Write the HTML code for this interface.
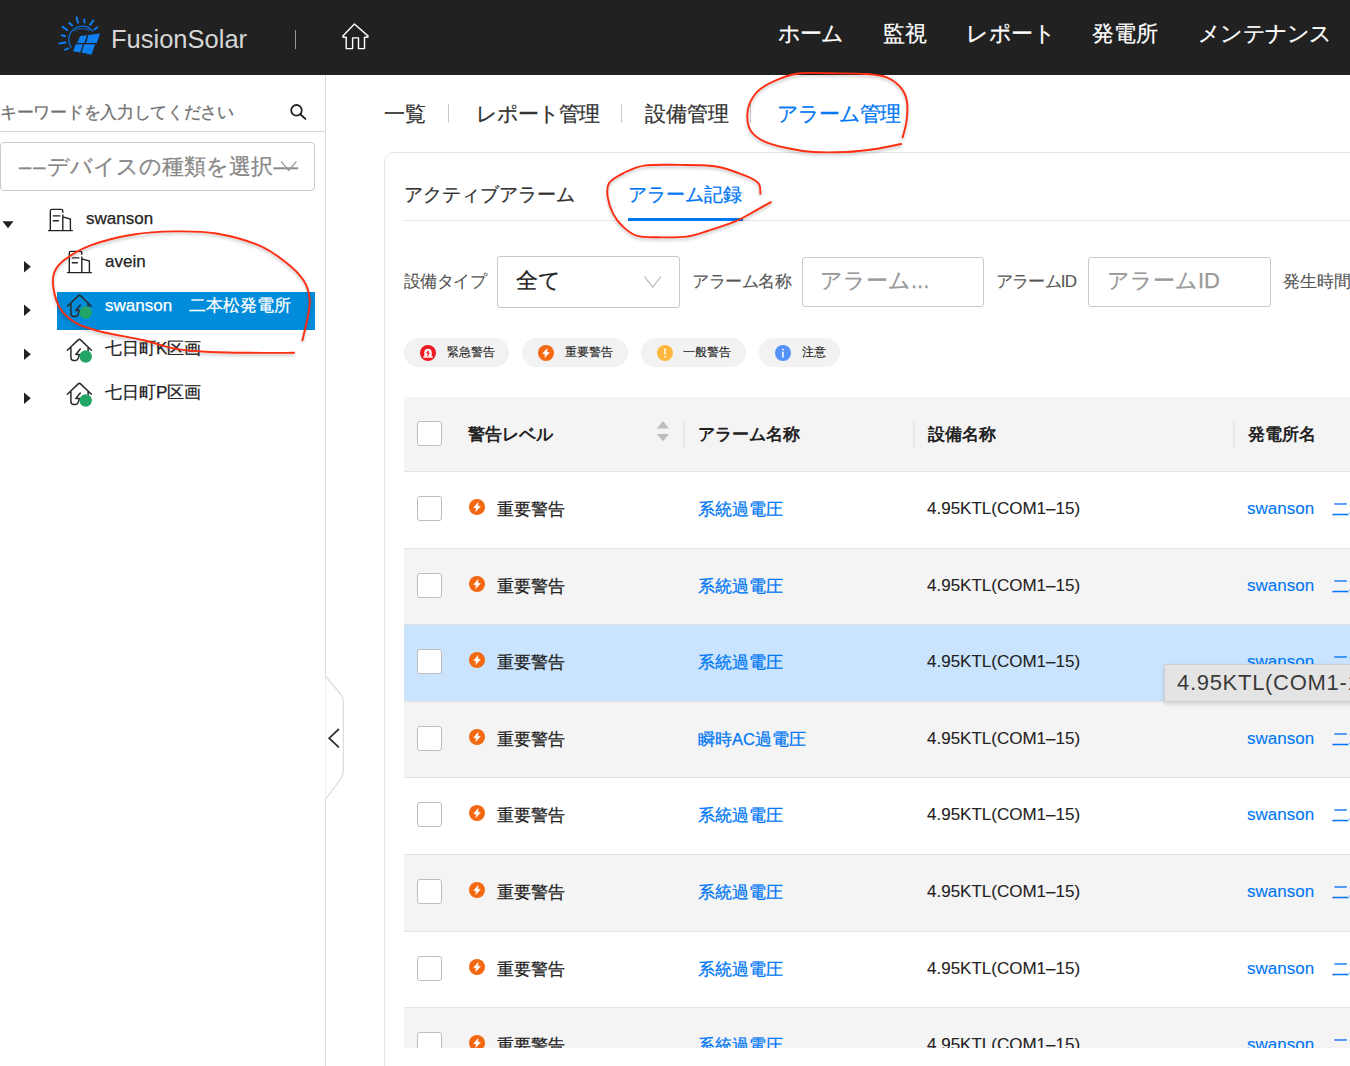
<!DOCTYPE html>
<html lang="ja">
<head>
<meta charset="utf-8">
<style>
*{box-sizing:border-box;margin:0;padding:0}
html,body{width:1350px;height:1066px;overflow:hidden;background:#fff}
body{position:relative;font-family:"Liberation Sans",sans-serif;color:#333;-webkit-text-stroke:.25px}
.a{position:absolute;white-space:nowrap}
svg{display:block}
#hdr{position:absolute;left:0;top:0;width:1350px;height:75px;background:#212121}
.nav{position:absolute;top:19px;font-size:22px;color:#fff;line-height:30px;white-space:nowrap}
#side{position:absolute;left:0;top:75px;width:326px;height:991px;border-right:1px solid #dcdcdc;background:#fff}
.tree{position:absolute;font-size:17px;color:#222;line-height:22px;white-space:nowrap}
.tabs{position:absolute;top:99px;font-size:21px;line-height:30px;color:#333;white-space:nowrap}
.vd{position:absolute;width:1px;background:#c8c8c8}
#card{position:absolute;left:384px;top:152px;width:1100px;height:1000px;border:1px solid #e6e6e6;border-radius:10px;background:#fff}
.lbl{position:absolute;font-size:17px;color:#555;line-height:22px;white-space:nowrap;-webkit-text-stroke:.12px}
.inp{position:absolute;border:1px solid #c9c9c9;border-radius:3px;background:#fff}
.chip{position:absolute;top:338px;height:29px;border-radius:15px;background:#f2f2f2;font-size:12px;color:#222;line-height:29px;white-space:nowrap;-webkit-text-stroke:.12px}
.chip svg{position:absolute;top:6.8px}
#tbl{position:absolute;left:404px;top:397px;width:946px;height:651px;overflow:hidden}
.row{position:absolute;left:0;width:1000px;border-top:1px solid #e3e3e3}
.cb{position:absolute;left:13px;top:24px;width:25px;height:25px;border:1px solid #bdbdbd;border-radius:3px;background:#fff}
.ico{position:absolute;left:65px;top:27px}
.cell{position:absolute;top:26px;font-size:17px;line-height:22px;color:#222;white-space:nowrap;-webkit-text-stroke:.1px}
.lnk{color:#0077f5}
.hd{font-weight:bold;top:27px;-webkit-text-stroke:0}
.cj{font-size:16.5px;top:26px;-webkit-text-stroke:.25px}
</style>
</head>
<body>
<div id="hdr">
  <div class="a" style="left:111px;top:22.5px;font-size:25.5px;color:#d6d6d6;line-height:32px;-webkit-text-stroke:0">FusionSolar</div>
  <div class="a" style="left:295px;top:30px;width:1px;height:19px;background:#999"></div>
  
<!-- logo -->
<svg class="a" style="left:55px;top:12px" width="50" height="48" viewBox="0 0 50 48">
 <g fill="#0f7ef0">
  <path d="M25.2 23.9 L32 23.2 L29.3 31.1 L22.1 30.9 Z"/>
  <path d="M33.3 23 L45 21.4 L41.9 31.1 L31.1 31.1 Z"/>
  <path d="M20.7 32.2 L27.9 32.2 L25.2 40.5 L18 39.2 Z"/>
  <path d="M29.3 32.2 L40.1 32.2 L36.5 42.8 L26.6 40.5 Z"/>
 </g>
 <g stroke="#0f7ef0" stroke-width="2" stroke-linecap="round" fill="none">
  <path d="M21.6 5.4 L23 10.8 M29.3 7.7 L29.5 10.6 M38.3 8.6 L35.1 12.8 M42.3 15.3 L39.6 17.3 M14.4 11 L17.1 13.5 M7.7 14.9 L12.4 18.2 M6.8 23.2 L10.1 24.3 M4.5 31.5 L10.4 30.6 M10.1 37.8 L13.3 36.3"/>
 </g>
 <path d="M16.5 35.5 A13 13 0 1 1 38 19.5" stroke="#0a6fd6" stroke-width="1.3" fill="none"/>
 <path d="M19 19 Q26 14.5 35 18.5" stroke="#0a6fd6" stroke-width="0.9" fill="none"/>
</svg>
<!-- home -->
<svg class="a" style="left:0;top:0" width="400" height="75" viewBox="0 0 400 75">
 <path d="M354.4 24 L342.9 35.9 Q342.3 37.2 343.6 37.2 L346.2 37.2 L346.2 48.6 L352.6 48.6 L352.6 37.9 L358.5 37.9 L358.5 48.6 L364.5 48.6 L364.5 37.2 L367.2 37.2 Q368.5 37.2 367.9 35.9 Z" stroke="#fff" stroke-width="1.4" fill="none" stroke-linejoin="round"/>
</svg>
<div class="nav" style="left:778px;letter-spacing:-1px">ホーム</div>
  <div class="nav" style="left:883px">監視</div>
  <div class="nav" style="left:966px;letter-spacing:-.4px">レポート</div>
  <div class="nav" style="left:1092px">発電所</div>
  <div class="nav" style="left:1198px;letter-spacing:-.75px">メンテナンス</div>
</div>
<div id="side">
  <div class="a" style="left:0;top:26.5px;font-size:17px;color:#707070;line-height:22px;letter-spacing:-.3px">キーワードを入力してください</div>
  <div class="a" style="left:0;top:56px;width:325px;height:1px;background:#d6d6d6"></div>
  <div class="inp" style="left:0;top:67px;width:315px;height:49px;border-radius:4px"></div>
  <div class="a" style="left:19px;top:77px;font-size:22px;color:#888;line-height:30px"><span style="letter-spacing:2px">––</span>デバイスの種類を選択<span style="letter-spacing:0">––</span></div>
</div>

<div class="a" style="left:57px;top:292px;width:258px;height:38px;background:#008cdb"></div>
<!-- search icon -->
<svg class="a" style="left:286px;top:100px" width="24" height="24" viewBox="286 100 24 24">
 <circle cx="296.5" cy="110.3" r="5.3" stroke="#222" stroke-width="1.8" fill="none"/>
 <path d="M300.3 114.2 L305.4 118.9" stroke="#222" stroke-width="1.9" stroke-linecap="round"/>
</svg>
<!-- select chevron -->
<svg class="a" style="left:278px;top:158px" width="22" height="16" viewBox="278 158 22 16">
 <path d="M281 161.3 L288.7 170.5 L296.5 161.3" stroke="#999" stroke-width="1.3" fill="none"/>
</svg>
<!-- tree triangles -->
<svg class="a" style="left:0;top:200px" width="100" height="210" viewBox="0 200 100 210">
 <path d="M2.5 221.3 H13.5 L8 228.3 Z" fill="#222"/>
 <path d="M24 261 V272.4 L30.8 266.7 Z" fill="#222"/>
 <path d="M24 304.6 V316 L30.8 310.3 Z" fill="#222"/>
 <path d="M24 348.6 V360 L30.8 354.3 Z" fill="#222"/>
 <path d="M24 392.6 V404 L30.8 398.3 Z" fill="#222"/>
</svg>

<svg class="a" style="left:44px;top:204px" width="34" height="32" viewBox="0 0 34 32"><path d="M6.3 26 V6.9 Q6.3 5.4 7.8 5.4 H17.3 Q18.8 5.4 18.8 6.9 V8.3 M18.8 11 V26 M18.8 12.9 L26.4 15 V26.6 M4.5 26.6 H28.4 M9.3 11.9 H15.9 M9.3 16.7 H14.4" stroke="#222" stroke-width="1.4" fill="none" stroke-linecap="round"/></svg>
<svg class="a" style="left:63px;top:246px" width="34" height="32" viewBox="0 0 34 32"><path d="M6.3 26 V6.9 Q6.3 5.4 7.8 5.4 H17.3 Q18.8 5.4 18.8 6.9 V8.3 M18.8 11 V26 M18.8 12.9 L26.4 15 V26.6 M4.5 26.6 H28.4 M9.3 11.9 H15.9 M9.3 16.7 H14.4" stroke="#222" stroke-width="1.4" fill="none" stroke-linecap="round"/></svg>
<svg class="a" style="left:62px;top:290px" width="34" height="32" viewBox="0 0 34 32"><path d="M5.4 16.2 L16.2 5.9 Q17.4 4.8 18.6 5.9 L29.4 16.2 M8.9 14 V23.4 Q8.9 26.4 11.9 26.4 H13.6 Q15 26.4 15.8 25.2 L17.7 20.4 H13.8 L18.3 15 M26.1 13.5 V19" stroke="#2a2a2a" stroke-width="1.5" fill="none" stroke-linecap="round" stroke-linejoin="round"/><circle cx="23.7" cy="22.5" r="6.2" fill="#22a565"/></svg>
<svg class="a" style="left:62px;top:334px" width="34" height="32" viewBox="0 0 34 32"><path d="M5.4 16.2 L16.2 5.9 Q17.4 4.8 18.6 5.9 L29.4 16.2 M8.9 14 V23.4 Q8.9 26.4 11.9 26.4 H13.6 Q15 26.4 15.8 25.2 L17.7 20.4 H13.8 L18.3 15 M26.1 13.5 V19" stroke="#2a2a2a" stroke-width="1.5" fill="none" stroke-linecap="round" stroke-linejoin="round"/><circle cx="23.7" cy="22.5" r="6.2" fill="#22a565"/></svg>
<svg class="a" style="left:62px;top:378px" width="34" height="32" viewBox="0 0 34 32"><path d="M5.4 16.2 L16.2 5.9 Q17.4 4.8 18.6 5.9 L29.4 16.2 M8.9 14 V23.4 Q8.9 26.4 11.9 26.4 H13.6 Q15 26.4 15.8 25.2 L17.7 20.4 H13.8 L18.3 15 M26.1 13.5 V19" stroke="#2a2a2a" stroke-width="1.5" fill="none" stroke-linecap="round" stroke-linejoin="round"/><circle cx="23.7" cy="22.5" r="6.2" fill="#22a565"/></svg>
<div class="tree" style="left:86px;top:208px">swanson</div>
<div class="tree" style="left:105px;top:251px">avein</div>
<div class="tree" style="left:105px;top:295px;color:#fff">swanson　二本松発電所</div>
<div class="tree" style="left:105px;top:338px">七日町K区画</div>
<div class="tree" style="left:105px;top:382px">七日町P区画</div>

<div class="tabs" style="left:384px">一覧</div>
<div class="vd" style="left:448px;top:104px;height:19px"></div>
<div class="tabs" style="left:476px;letter-spacing:-1.1px">レポート管理</div>
<div class="vd" style="left:621px;top:104px;height:19px"></div>
<div class="tabs" style="left:645px">設備管理</div>
<div class="vd" style="left:750px;top:104px;height:19px"></div>
<div class="tabs" style="left:777px;color:#0077f5;letter-spacing:-1px">アラーム管理</div>

<div id="card"></div>
<div class="a" style="left:404px;top:181px;font-size:19px;line-height:28px;color:#333">アクティブアラーム</div>
<div class="a" style="left:628px;top:181px;font-size:19px;line-height:28px;color:#0077f5">アラーム記録</div>
<div class="a" style="left:404px;top:220px;width:946px;height:1px;background:#e8e8e8"></div>
<div class="a" style="left:628px;top:218px;width:115px;height:3px;background:#0077f5"></div>

<div class="lbl" style="left:404px;top:271px;letter-spacing:-.6px">設備タイプ</div>
<div class="inp" style="left:497px;top:256px;width:183px;height:52px"></div>
<div class="a" style="left:516px;top:266px;font-size:22px;line-height:30px;color:#222">全て</div>

<svg class="a" style="left:640px;top:272px" width="26" height="20" viewBox="640 272 26 20">
 <path d="M644.3 276.5 L652.7 287 L661 276.5" stroke="#b5b5b5" stroke-width="1.2" fill="none"/>
</svg>

<div class="lbl" style="left:692px;top:271px;letter-spacing:-.4px">アラーム名称</div>
<div class="inp" style="left:802px;top:257px;width:182px;height:50px"></div>
<div class="a" style="left:820px;top:266px;font-size:22px;line-height:30px;color:#999">アラーム...</div>
<div class="lbl" style="left:996px;top:271px;letter-spacing:-.8px">アラームID</div>
<div class="inp" style="left:1088px;top:257px;width:183px;height:50px"></div>
<div class="a" style="left:1107px;top:266px;font-size:22px;line-height:30px;color:#999">アラームID</div>
<div class="lbl" style="left:1283px;top:271px">発生時間</div>

<div class="chip" style="left:404px;width:105px"><svg style="left:16px" width="16" height="16" viewBox="0 0 16 16"><circle cx="8" cy="8" r="8" fill="#ee1c22"/><path d="M4.3 11.5 V7.6 Q4.3 3.7 8 3.7 Q11.7 3.7 11.7 7.6 V11.5 Z" fill="#fff"/><rect x="3.2" y="11.3" width="9.6" height="1.4" fill="#fff"/><path d="M8.8 5.8 L6.7 8 H9.2 L7.4 10.9" stroke="#ee1c22" stroke-width="1.1" fill="none" stroke-linejoin="round"/></svg><span style="position:absolute;left:43px">緊急警告</span></div>
<div class="chip" style="left:522px;width:106px"><svg style="left:16px" width="16" height="16" viewBox="0 0 16 16"><circle cx="8" cy="8" r="8" fill="#f56812"/><path d="M9.1 3.6 L4.8 8.5 L7.4 9.2 L6.8 12.4 L11.3 7.6 L8.7 6.9 Z" fill="#fff" stroke="#fff" stroke-width=".6" stroke-linejoin="round"/></svg><span style="position:absolute;left:43px">重要警告</span></div>
<div class="chip" style="left:641px;width:105px"><svg style="left:16px" width="16" height="16" viewBox="0 0 16 16"><circle cx="8" cy="8" r="8" fill="#ffb83d"/><rect x="7.3" y="3.5" width="1.4" height="6.2" rx=".7" fill="#fff"/><circle cx="8" cy="11.7" r=".85" fill="#fff"/></svg><span style="position:absolute;left:42px">一般警告</span></div>
<div class="chip" style="left:759px;width:81px"><svg style="left:16px" width="16" height="16" viewBox="0 0 16 16"><circle cx="8" cy="8" r="8" fill="#5592fa"/><circle cx="7.9" cy="4.6" r=".95" fill="#fff"/><rect x="7.1" y="6.6" width="1.6" height="5.8" rx=".5" fill="#fff"/></svg><span style="position:absolute;left:43px">注意</span></div>

<div id="tbl">
<div class="row" style="top:0;height:75px;background:#f4f4f4;border-top:none;border-bottom:1px solid #e3e3e3">
  <div class="cb"></div>
<svg style="position:absolute;left:0;top:0" width="946" height="75" viewBox="404 397 946 75">
 <path d="M656.9 428.5 L663 421 L669 428.5 Z M656.9 434 L669 434 L663 441.2 Z" fill="#bdbdbd"/>
 <path d="M684 421 V447 M914 421 V447 M1234 421 V447" stroke="#e2e2e2" stroke-width="1.5"/>
</svg>
  <div class="cell hd" style="left:64px">警告レベル</div>
  <div class="cell hd" style="left:294px">アラーム名称</div>
  <div class="cell hd" style="left:524px">設備名称</div>
  <div class="cell hd" style="left:844px">発電所名</div>
</div>
<div class="row" style="top:74px;height:77px;background:#fff"><div class="cb"></div><div class="ico"><svg width="16" height="16" viewBox="0 0 16 16"><circle cx="8" cy="8" r="8" fill="#f56812"/><path d="M9.1 3.6 L4.8 8.5 L7.4 9.2 L6.8 12.4 L11.3 7.6 L8.7 6.9 Z" fill="#fff" stroke="#fff" stroke-width=".6" stroke-linejoin="round"/></svg></div><div class="cell cj" style="left:93px">重要警告</div><div class="cell cj lnk" style="left:294px">系統過電圧</div><div class="cell" style="left:523px">4.95KTL(COM1–15)</div><div class="cell lnk" style="left:843px">swanson</div><div class="cell cj lnk" style="left:928px">二本松発電所</div></div>
<div class="row" style="top:151px;height:76px;background:#f4f4f4"><div class="cb"></div><div class="ico"><svg width="16" height="16" viewBox="0 0 16 16"><circle cx="8" cy="8" r="8" fill="#f56812"/><path d="M9.1 3.6 L4.8 8.5 L7.4 9.2 L6.8 12.4 L11.3 7.6 L8.7 6.9 Z" fill="#fff" stroke="#fff" stroke-width=".6" stroke-linejoin="round"/></svg></div><div class="cell cj" style="left:93px">重要警告</div><div class="cell cj lnk" style="left:294px">系統過電圧</div><div class="cell" style="left:523px">4.95KTL(COM1–15)</div><div class="cell lnk" style="left:843px">swanson</div><div class="cell cj lnk" style="left:928px">二本松発電所</div></div>
<div class="row" style="top:227px;height:77px;background:#c9e4fc"><div class="cb"></div><div class="ico"><svg width="16" height="16" viewBox="0 0 16 16"><circle cx="8" cy="8" r="8" fill="#f56812"/><path d="M9.1 3.6 L4.8 8.5 L7.4 9.2 L6.8 12.4 L11.3 7.6 L8.7 6.9 Z" fill="#fff" stroke="#fff" stroke-width=".6" stroke-linejoin="round"/></svg></div><div class="cell cj" style="left:93px">重要警告</div><div class="cell cj lnk" style="left:294px">系統過電圧</div><div class="cell" style="left:523px">4.95KTL(COM1–15)</div><div class="cell lnk" style="left:843px">swanson</div><div class="cell cj lnk" style="left:928px">二本松発電所</div></div>
<div class="row" style="top:304px;height:76px;background:#f4f4f4"><div class="cb"></div><div class="ico"><svg width="16" height="16" viewBox="0 0 16 16"><circle cx="8" cy="8" r="8" fill="#f56812"/><path d="M9.1 3.6 L4.8 8.5 L7.4 9.2 L6.8 12.4 L11.3 7.6 L8.7 6.9 Z" fill="#fff" stroke="#fff" stroke-width=".6" stroke-linejoin="round"/></svg></div><div class="cell cj" style="left:93px">重要警告</div><div class="cell cj lnk" style="left:294px">瞬時AC過電圧</div><div class="cell" style="left:523px">4.95KTL(COM1–15)</div><div class="cell lnk" style="left:843px">swanson</div><div class="cell cj lnk" style="left:928px">二本松発電所</div></div>
<div class="row" style="top:380px;height:77px;background:#fff"><div class="cb"></div><div class="ico"><svg width="16" height="16" viewBox="0 0 16 16"><circle cx="8" cy="8" r="8" fill="#f56812"/><path d="M9.1 3.6 L4.8 8.5 L7.4 9.2 L6.8 12.4 L11.3 7.6 L8.7 6.9 Z" fill="#fff" stroke="#fff" stroke-width=".6" stroke-linejoin="round"/></svg></div><div class="cell cj" style="left:93px">重要警告</div><div class="cell cj lnk" style="left:294px">系統過電圧</div><div class="cell" style="left:523px">4.95KTL(COM1–15)</div><div class="cell lnk" style="left:843px">swanson</div><div class="cell cj lnk" style="left:928px">二本松発電所</div></div>
<div class="row" style="top:457px;height:77px;background:#f4f4f4"><div class="cb"></div><div class="ico"><svg width="16" height="16" viewBox="0 0 16 16"><circle cx="8" cy="8" r="8" fill="#f56812"/><path d="M9.1 3.6 L4.8 8.5 L7.4 9.2 L6.8 12.4 L11.3 7.6 L8.7 6.9 Z" fill="#fff" stroke="#fff" stroke-width=".6" stroke-linejoin="round"/></svg></div><div class="cell cj" style="left:93px">重要警告</div><div class="cell cj lnk" style="left:294px">系統過電圧</div><div class="cell" style="left:523px">4.95KTL(COM1–15)</div><div class="cell lnk" style="left:843px">swanson</div><div class="cell cj lnk" style="left:928px">二本松発電所</div></div>
<div class="row" style="top:534px;height:76px;background:#fff"><div class="cb"></div><div class="ico"><svg width="16" height="16" viewBox="0 0 16 16"><circle cx="8" cy="8" r="8" fill="#f56812"/><path d="M9.1 3.6 L4.8 8.5 L7.4 9.2 L6.8 12.4 L11.3 7.6 L8.7 6.9 Z" fill="#fff" stroke="#fff" stroke-width=".6" stroke-linejoin="round"/></svg></div><div class="cell cj" style="left:93px">重要警告</div><div class="cell cj lnk" style="left:294px">系統過電圧</div><div class="cell" style="left:523px">4.95KTL(COM1–15)</div><div class="cell lnk" style="left:843px">swanson</div><div class="cell cj lnk" style="left:928px">二本松発電所</div></div>
<div class="row" style="top:610px;height:77px;background:#f4f4f4"><div class="cb"></div><div class="ico"><svg width="16" height="16" viewBox="0 0 16 16"><circle cx="8" cy="8" r="8" fill="#f56812"/><path d="M9.1 3.6 L4.8 8.5 L7.4 9.2 L6.8 12.4 L11.3 7.6 L8.7 6.9 Z" fill="#fff" stroke="#fff" stroke-width=".6" stroke-linejoin="round"/></svg></div><div class="cell cj" style="left:93px">重要警告</div><div class="cell cj lnk" style="left:294px">系統過電圧</div><div class="cell" style="left:523px">4.95KTL(COM1–15)</div><div class="cell lnk" style="left:843px">swanson</div><div class="cell cj lnk" style="left:928px">二本松発電所</div></div>
</div>
<div class="a" style="left:1164px;top:664px;width:200px;height:38px;background:#e4e4e4;border:1px solid #cfcfcf;box-shadow:0 2px 4px rgba(0,0,0,.15);font-size:22px;line-height:36px;color:#3a3a3a;padding-left:12px;letter-spacing:.7px;-webkit-text-stroke:0">4.95KTL(COM1-15)</div>

<svg class="a" style="left:320px;top:670px" width="30" height="135" viewBox="320 670 30 135">
 <path d="M325.5 676 L340.5 694 Q343.4 697.5 343.4 702 V771 Q343.4 775.5 340.5 779 L325.5 799.5" stroke="#dcdcdc" stroke-width="1.2" fill="#fff"/>
 <path d="M338.9 729 L329.2 738.2 L338.9 747.3" stroke="#333" stroke-width="1.8" fill="none"/>
</svg>

<svg class="a" style="left:0;top:0;filter:drop-shadow(0 2px 1.5px rgba(0,0,0,.25))" width="1350" height="400" viewBox="0 0 1350 400">
 <g stroke="#ff2d12" stroke-width="1.9" fill="none" stroke-linecap="round">
  <path d="M902.7 137.3 C903.4 134.4 906.0 126.2 906.7 120.0 C907.4 113.8 907.8 105.5 906.7 100.0 C905.6 94.5 903.3 90.5 900.0 86.7 C896.7 82.9 892.2 79.4 886.7 77.3 C881.2 75.2 875.6 74.7 866.7 74.0 C857.8 73.3 844.4 73.4 833.3 73.3 C822.2 73.2 808.9 72.4 800.0 73.3 C791.1 74.2 786.7 76.0 780.0 78.7 C773.3 81.4 765.0 85.3 760.0 89.3 C755.0 93.3 752.1 98.2 750.0 102.7 C747.9 107.2 747.2 111.3 747.3 116.0 C747.4 120.7 747.9 126.5 750.7 130.7 C753.5 134.9 758.0 138.4 764.0 141.3 C770.0 144.2 778.5 146.2 786.7 148.0 C794.9 149.8 803.3 151.3 813.3 152.0 C823.3 152.7 836.7 152.4 846.7 152.0 C856.7 151.6 864.2 150.6 873.3 149.3 C882.4 148.0 896.6 144.9 901.3 144.0"/>
  <path d="M760.4 193.7 C760.0 191.9 761.2 186.3 758.3 183.1 C755.4 179.9 750.1 177.5 742.8 174.7 C735.5 171.9 725.2 167.9 714.6 166.3 C704.0 164.7 691.1 165.0 679.4 164.9 C667.7 164.8 653.7 164.2 644.3 165.6 C634.9 167.0 629.0 170.4 623.1 173.3 C617.2 176.2 611.7 179.1 609.1 183.1 C606.5 187.1 607.0 192.0 607.7 197.2 C608.4 202.4 610.7 209.2 613.3 214.1 C615.9 219.0 619.1 223.2 623.1 226.8 C627.1 230.4 631.3 234.2 637.2 235.9 C643.1 237.7 650.1 237.2 658.3 237.3 C666.5 237.4 678.3 237.7 686.5 236.6 C694.7 235.5 699.4 233.6 707.6 231.0 C715.8 228.4 727.5 224.7 735.7 221.2 C743.9 217.7 751.0 213.1 756.9 209.9 C762.8 206.7 768.6 203.5 770.9 202.2"/>
  <path d="M302.4 340.3 C303.3 336.5 306.4 324.4 307.6 317.5 C308.8 310.6 310.4 305.0 309.7 298.8 C309.0 292.6 307.6 286.4 303.5 280.2 C299.4 274.0 292.4 267.4 284.8 261.5 C277.2 255.6 269.2 249.6 257.8 244.9 C246.4 240.2 230.1 235.8 216.3 233.5 C202.5 231.2 188.7 231.2 174.9 231.4 C161.1 231.6 147.2 232.2 133.4 234.5 C119.6 236.8 103.3 240.8 91.9 244.9 C80.5 249.1 71.1 254.9 64.9 259.4 C58.7 263.9 56.4 267.0 54.5 271.9 C52.6 276.8 52.5 282.3 53.5 288.5 C54.5 294.7 56.7 303.3 60.7 309.2 C64.7 315.1 70.4 319.9 77.3 323.7 C84.2 327.5 91.1 329.2 102.2 332.0 C113.3 334.8 131.6 337.5 143.7 340.3 C155.8 343.1 164.5 346.7 174.9 348.6 C185.3 350.5 193.9 351.0 206.0 351.7 C218.1 352.4 232.8 352.6 247.5 352.8 C262.2 353.0 286.3 352.8 294.1 352.8"/>
 </g>
</svg>
</body>
</html>
